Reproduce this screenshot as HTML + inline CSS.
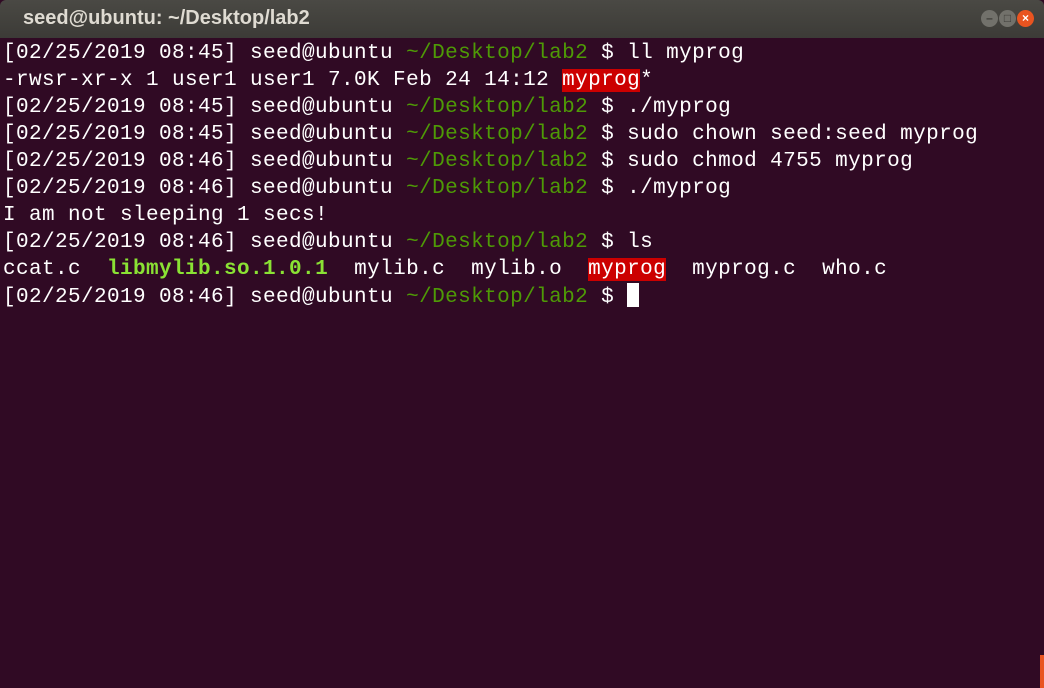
<!DOCTYPE html>
<html><head><style>
body{margin:0;width:1044px;height:688px;overflow:hidden;background:#300a24;position:relative}
.title{position:absolute;left:0;top:0;width:1044px;height:38px;background:linear-gradient(#4a4944,#3c3b37);border-radius:6px 6px 0 0;}
.title span{position:absolute;left:23px;top:7px;font:bold 20px "Liberation Sans",sans-serif;color:#dfdbd2}
.btn{position:absolute;top:10px;width:17px;height:17px;border-radius:50%;background:#72716b;color:#3c3b37;font:bold 12px sans-serif;text-align:center;line-height:17px}
.term{position:absolute;left:3px;top:40px;font-family:"Liberation Mono","DejaVu Sans Mono",monospace;font-size:21px;letter-spacing:0.4px;line-height:27px;color:#fff;white-space:pre}
.g{color:#4e9a06}.b{color:#8ae234;font-weight:bold}
.r{background:#cc0000}
.cur{display:inline-block;width:12px;height:24px;background:#fff;vertical-align:-5px}
</style></head><body>
<div class="title"><span>seed@ubuntu: ~/Desktop/lab2</span>
<div class="btn" style="left:981px">–</div><div class="btn" style="left:999px">□</div>
<div class="btn" style="left:1017px;background:#e95420;color:#fff">×</div></div>
<div class="term">[02/25/2019 08:45] seed@ubuntu <span class="g">~/Desktop/lab2</span> $ ll myprog
-rwsr-xr-x 1 user1 user1 7.0K Feb 24 14:12 <span class="r">myprog</span>*
[02/25/2019 08:45] seed@ubuntu <span class="g">~/Desktop/lab2</span> $ ./myprog
[02/25/2019 08:45] seed@ubuntu <span class="g">~/Desktop/lab2</span> $ sudo chown seed:seed myprog
[02/25/2019 08:46] seed@ubuntu <span class="g">~/Desktop/lab2</span> $ sudo chmod 4755 myprog
[02/25/2019 08:46] seed@ubuntu <span class="g">~/Desktop/lab2</span> $ ./myprog
I am not sleeping 1 secs!
[02/25/2019 08:46] seed@ubuntu <span class="g">~/Desktop/lab2</span> $ ls
ccat.c  <span class="b">libmylib.so.1.0.1</span>  mylib.c  mylib.o  <span class="r">myprog</span>  myprog.c  who.c
[02/25/2019 08:46] seed@ubuntu <span class="g">~/Desktop/lab2</span> $ <span class="cur"></span></div>
<div style="position:absolute;left:1040px;top:655px;width:4px;height:33px;background:#e95420"></div>
</body></html>
